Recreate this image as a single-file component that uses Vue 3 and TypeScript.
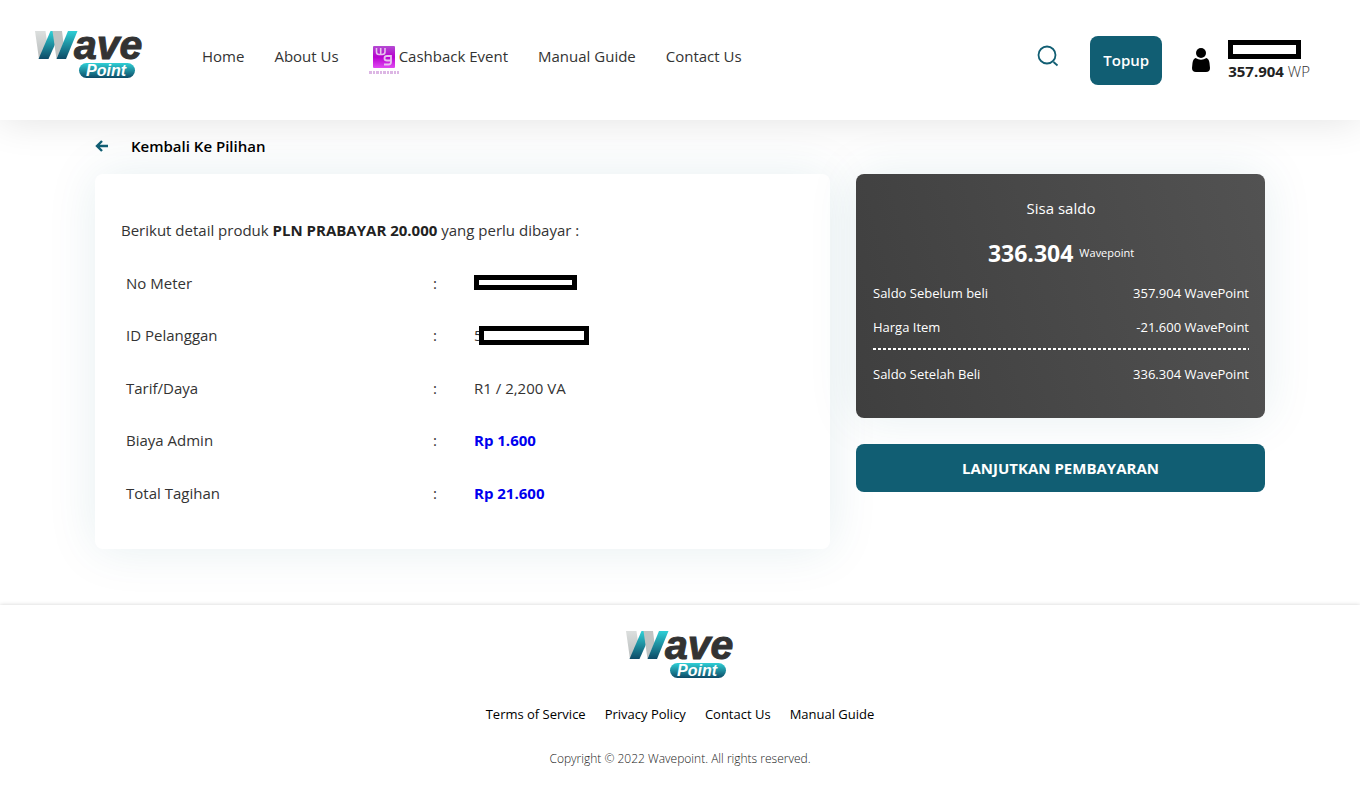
<script setup lang="ts">
import { h } from 'vue'

interface Detail {
  label: string
  value: string
  kind: 'masked' | 'masked-wide' | 'text' | 'price'
}

const details: Detail[] = [
  { label: 'No Meter', value: '', kind: 'masked' },
  { label: 'ID Pelanggan', value: '5', kind: 'masked-wide' },
  { label: 'Tarif/Daya', value: 'R1 / 2,200 VA', kind: 'text' },
  { label: 'Biaya Admin', value: 'Rp 1.600', kind: 'price' },
  { label: 'Total Tagihan', value: 'Rp 21.600', kind: 'price' },
]

const footerLinks: string[] = ['Terms of Service', 'Privacy Policy', 'Contact Us', 'Manual Guide']

const stop = (offset: string, color: string) => h('stop', { offset, 'stop-color': color })
const gradient = (id: string, from: string, to: string) =>
  h('linearGradient', { id, x1: 0, y1: 0, x2: 0, y2: 1 }, [stop('0', from), stop('1', to)])

const WaveLogo = (props: { uid: string }) => {
  const teal = `${props.uid}-teal`
  const grey = `${props.uid}-grey`
  const font = { 'font-family': 'Liberation Sans, Arial, sans-serif', 'font-weight': 700, 'font-style': 'italic' }
  return h('svg', { width: 108, height: 50, viewBox: '0 0 108 50', overflow: 'visible', role: 'img', 'aria-label': 'Wave Point' }, [
    h('defs', [gradient(teal, '#2fd0d6', '#0d4a66'), gradient(grey, '#dcdfde', '#b6baba')]),
    h('path', { d: 'M0 1H10.500L12 12L4 29Z', fill: `url(#${grey})` }),
    h('path', { d: 'M15.500 1H26L13.500 29H3.500Z', fill: `url(#${teal})` }),
    h('path', { d: 'M17.500 1H27L28.500 13L21.500 29Z', fill: '#c0c4c3' }),
    h('path', { d: 'M33 1H42.500L31 29H21.500Z', fill: `url(#${teal})` }),
    h('text', { x: 39, y: 29, 'font-size': 41, fill: '#333', stroke: '#333', 'stroke-width': 1, ...font }, 'ave'),
    h('rect', { x: 44, y: 33, width: 56, height: 15, rx: 7.5, fill: `url(#${teal})` }),
    h('text', { x: 51, y: 46, 'font-size': 16, fill: '#fff', ...font }, 'Point'),
  ])
}
WaveLogo.props = ['uid']
</script>

<template>
  <div class="page">
    <header class="header">
      <a href="#" class="logo"><WaveLogo uid="top" /></a>
      <nav class="nav" aria-label="Main">
        <a href="#">Home</a>
        <a href="#">About Us</a>
        <a href="#" class="event">
          <svg width="30" height="32" viewBox="0 0 30 32" aria-hidden="true">
            <defs>
              <linearGradient id="event-bg" x1="0" y1="0" x2="0" y2="1">
                <stop offset="0" stop-color="#b44bd2" />
                <stop offset="0.5" stop-color="#b800d0" />
                <stop offset="1" stop-color="#e04af2" />
              </linearGradient>
            </defs>
            <rect x="4" y="2" width="22" height="22" rx="1" fill="url(#event-bg)" />
            <path d="M7.500 4V8Q7.500 10.500 10 10.500H13Q16 10.500 16 8V4M11.700 4V10" fill="none" stroke="#e6c3ee" stroke-width="1.600" />
            <path d="M22 11V18Q22 20.500 19.500 20.500H15M22 12H18Q15.500 12 15.500 14.200Q15.500 16.500 18 16.500H22" fill="none" stroke="#e6c3ee" stroke-width="1.800" />
            <path d="M0 28.500H30" stroke="#dcb6e4" stroke-width="3" stroke-dasharray="3 1 2 1" />
          </svg>
          <span>Cashback Event</span>
        </a>
        <a href="#">Manual Guide</a>
        <a href="#">Contact Us</a>
      </nav>
      <div class="actions">
        <button type="button" class="search" aria-label="Search">
          <svg width="22" height="22" viewBox="0 0 22 22" fill="none" stroke="#115e73" stroke-width="1.800">
            <circle cx="10" cy="10" r="8.5" />
            <path d="M16.500 17L20.500 20.500" />
          </svg>
        </button>
        <button type="button" class="topup">Topup</button>
        <div class="account">
          <svg width="18" height="24" viewBox="0 0 18 24" aria-hidden="true">
            <circle cx="9" cy="5" r="5" />
            <path d="M3.500 10Q9 13.500 14.500 10Q17 11 17.500 15L18 20Q18 24 14 24H4Q0 24 0 20L.5 15Q1 11 3.500 10Z" />
          </svg>
          <div>
            <div class="mask mask-name"></div>
            <div class="balance"><b>357.904</b> WP</div>
          </div>
        </div>
      </div>
    </header>

    <main class="main">
      <a href="#" class="back">
        <svg width="14" height="12" viewBox="0 0 14 12" fill="none" stroke="#115e73" stroke-width="2.400" aria-hidden="true">
          <path d="M7 1L2 6L7 11M2 6H13" />
        </svg>
        <span>Kembali Ke Pilihan</span>
      </a>
      <div class="columns">
        <section class="card">
          <p>Berikut detail produk <b>PLN PRABAYAR 20.000</b> yang perlu dibayar :</p>
          <table>
            <tbody>
              <tr v-for="row in details" :key="row.label">
                <th scope="row">{{ row.label }}</th>
                <td class="colon">:</td>
                <td :class="row.kind">
                  <span v-if="row.value">{{ row.value }}</span>
                  <span v-if="row.kind.startsWith('masked')" class="mask"></span>
                </td>
              </tr>
            </tbody>
          </table>
        </section>

        <aside class="side">
          <section class="saldo">
            <h2>Sisa saldo</h2>
            <div class="amount"><b>336.304</b><span>Wavepoint</span></div>
            <dl>
              <div><dt>Saldo Sebelum beli</dt><dd>357.904 WavePoint</dd></div>
              <div><dt>Harga Item</dt><dd>-21.600 WavePoint</dd></div>
              <div class="total"><dt>Saldo Setelah Beli</dt><dd>336.304 WavePoint</dd></div>
            </dl>
          </section>
          <button type="button" class="pay">LANJUTKAN PEMBAYARAN</button>
        </aside>
      </div>
    </main>

    <footer class="footer">
      <WaveLogo uid="bottom" />
      <nav aria-label="Footer">
        <a v-for="link in footerLinks" :key="link" href="#">{{ link }}</a>
      </nav>
      <p>Copyright © 2022 Wavepoint. All rights reserved.</p>
    </footer>
  </div>
</template>

<style>
body {
  margin: 0;
  background: #fff;
}
</style>

<style scoped>
.page {
  font-family: 'Open Sans', 'Noto Sans', sans-serif;
  font-size: 15px;
  font-weight: 400;
  line-height: 24px;
  color: #333;
}
a {
  color: inherit;
  text-decoration: none;
}
button {
  font: inherit;
  border: 0;
  cursor: pointer;
}
b {
  font-weight: 700;
  color: #222;
}
svg {
  display: block;
}
.header {
  position: relative;
  display: flex;
  align-items: center;
  min-height: 120px;
  padding: 0 50px 0 35px;
  box-sizing: border-box;
  background: #fff;
  box-shadow: 0 0 40px rgba(0, 0, 0, 0.12);
}
.logo {
  margin-bottom: 10px;
}
.nav {
  display: flex;
  align-items: center;
  gap: 30px;
  margin: 0 auto 8px 59px;
}
.event {
  display: flex;
  align-items: center;
}
.event svg {
  margin-top: 8px;
}
.actions {
  display: flex;
  align-items: center;
}
.search {
  margin: 0 31px 8px 0;
  padding: 0;
  background: none;
}
.topup {
  height: 49px;
  width: 72px;
  border-radius: 8px;
  background: #115e73;
  color: #fff;
  font-weight: 600;
}
.account {
  display: flex;
  align-items: center;
  gap: 18px;
  margin-left: 30px;
}
.mask {
  display: block;
  box-sizing: border-box;
  border: 5px solid #000;
  background: #fff;
}
.mask-name {
  width: 73px;
  height: 19px;
  margin-top: 2px;
}
.balance {
  font-weight: 300;
}
.main {
  max-width: 1170px;
  margin: 0 auto;
  padding: 14px 20px 56px;
}
.back {
  display: flex;
  align-items: center;
  gap: 22px;
  position: relative;
  margin-bottom: 16px;
  font-weight: 600;
  color: #000;
}
.columns {
  display: grid;
  grid-template-columns: minmax(0, 735fr) minmax(0, 409fr);
  align-items: start;
  gap: 26px;
}
.card {
  padding: 44px 26px 30px;
  border-radius: 8px;
  background: #fff;
  box-shadow: 0 0 50px rgba(17, 94, 115, 0.1);
}
.card p {
  margin: 0 0 14px;
}
table {
  width: 100%;
  table-layout: fixed;
  border-collapse: collapse;
}
tr {
  height: 53px;
}
tr:nth-child(even) {
  height: 52px;
}
th,
td {
  padding: 0 5px;
  font-weight: 400;
  text-align: left;
}
th {
  width: 297px;
}
.colon {
  width: 31px;
}
.masked .mask {
  width: 103px;
  height: 15px;
}
.masked-wide {
  display: flex;
  align-items: center;
  height: 52px;
}
.masked-wide .mask {
  width: 110px;
  height: 19px;
  margin-left: -4px;
}
.price {
  font-weight: 700;
  color: #0000ee;
}
.saldo {
  padding: 22px 16px 32px 17px;
  border-radius: 8px;
  background: linear-gradient(75deg, #3f3f3f, #525252);
  box-shadow: 0 0 50px rgba(17, 94, 115, 0.1);
  color: #fff;
}
h2 {
  margin: 0;
  font-size: 15px;
  font-weight: 400;
  text-align: center;
}
.amount {
  display: flex;
  justify-content: center;
  align-items: center;
  gap: 6px;
  margin: 18px 0 13px;
  line-height: 30px;
}
.amount b {
  font-size: 23px;
  color: #fff;
}
.amount span {
  font-size: 11px;
}
dl {
  margin: 0;
  font-size: 13px;
}
dl div {
  display: flex;
  justify-content: space-between;
  margin-bottom: 10px;
}
dd {
  margin: 0;
}
dl .total {
  margin: -1px 0 0;
  padding-top: 14px;
  background: repeating-linear-gradient(90deg, #fff 0 3px, transparent 3px 5px) top / 100% 2px no-repeat;
}
.pay {
  width: 100%;
  height: 48px;
  margin-top: 26px;
  border-radius: 8px;
  background: #115e73;
  color: #fff;
  font-weight: 700;
}
.footer {
  display: flex;
  flex-direction: column;
  align-items: center;
  padding: 25px 20px 23px;
  box-shadow: 0 0 4px rgba(0, 0, 0, 0.18);
}
.footer nav {
  display: flex;
  gap: 19px;
  margin: 22px 0 21px;
  font-size: 13px;
  color: #000;
}
.footer p {
  margin: 0;
  font-size: 12px;
  font-weight: 300;
  color: #222;
}
</style>
